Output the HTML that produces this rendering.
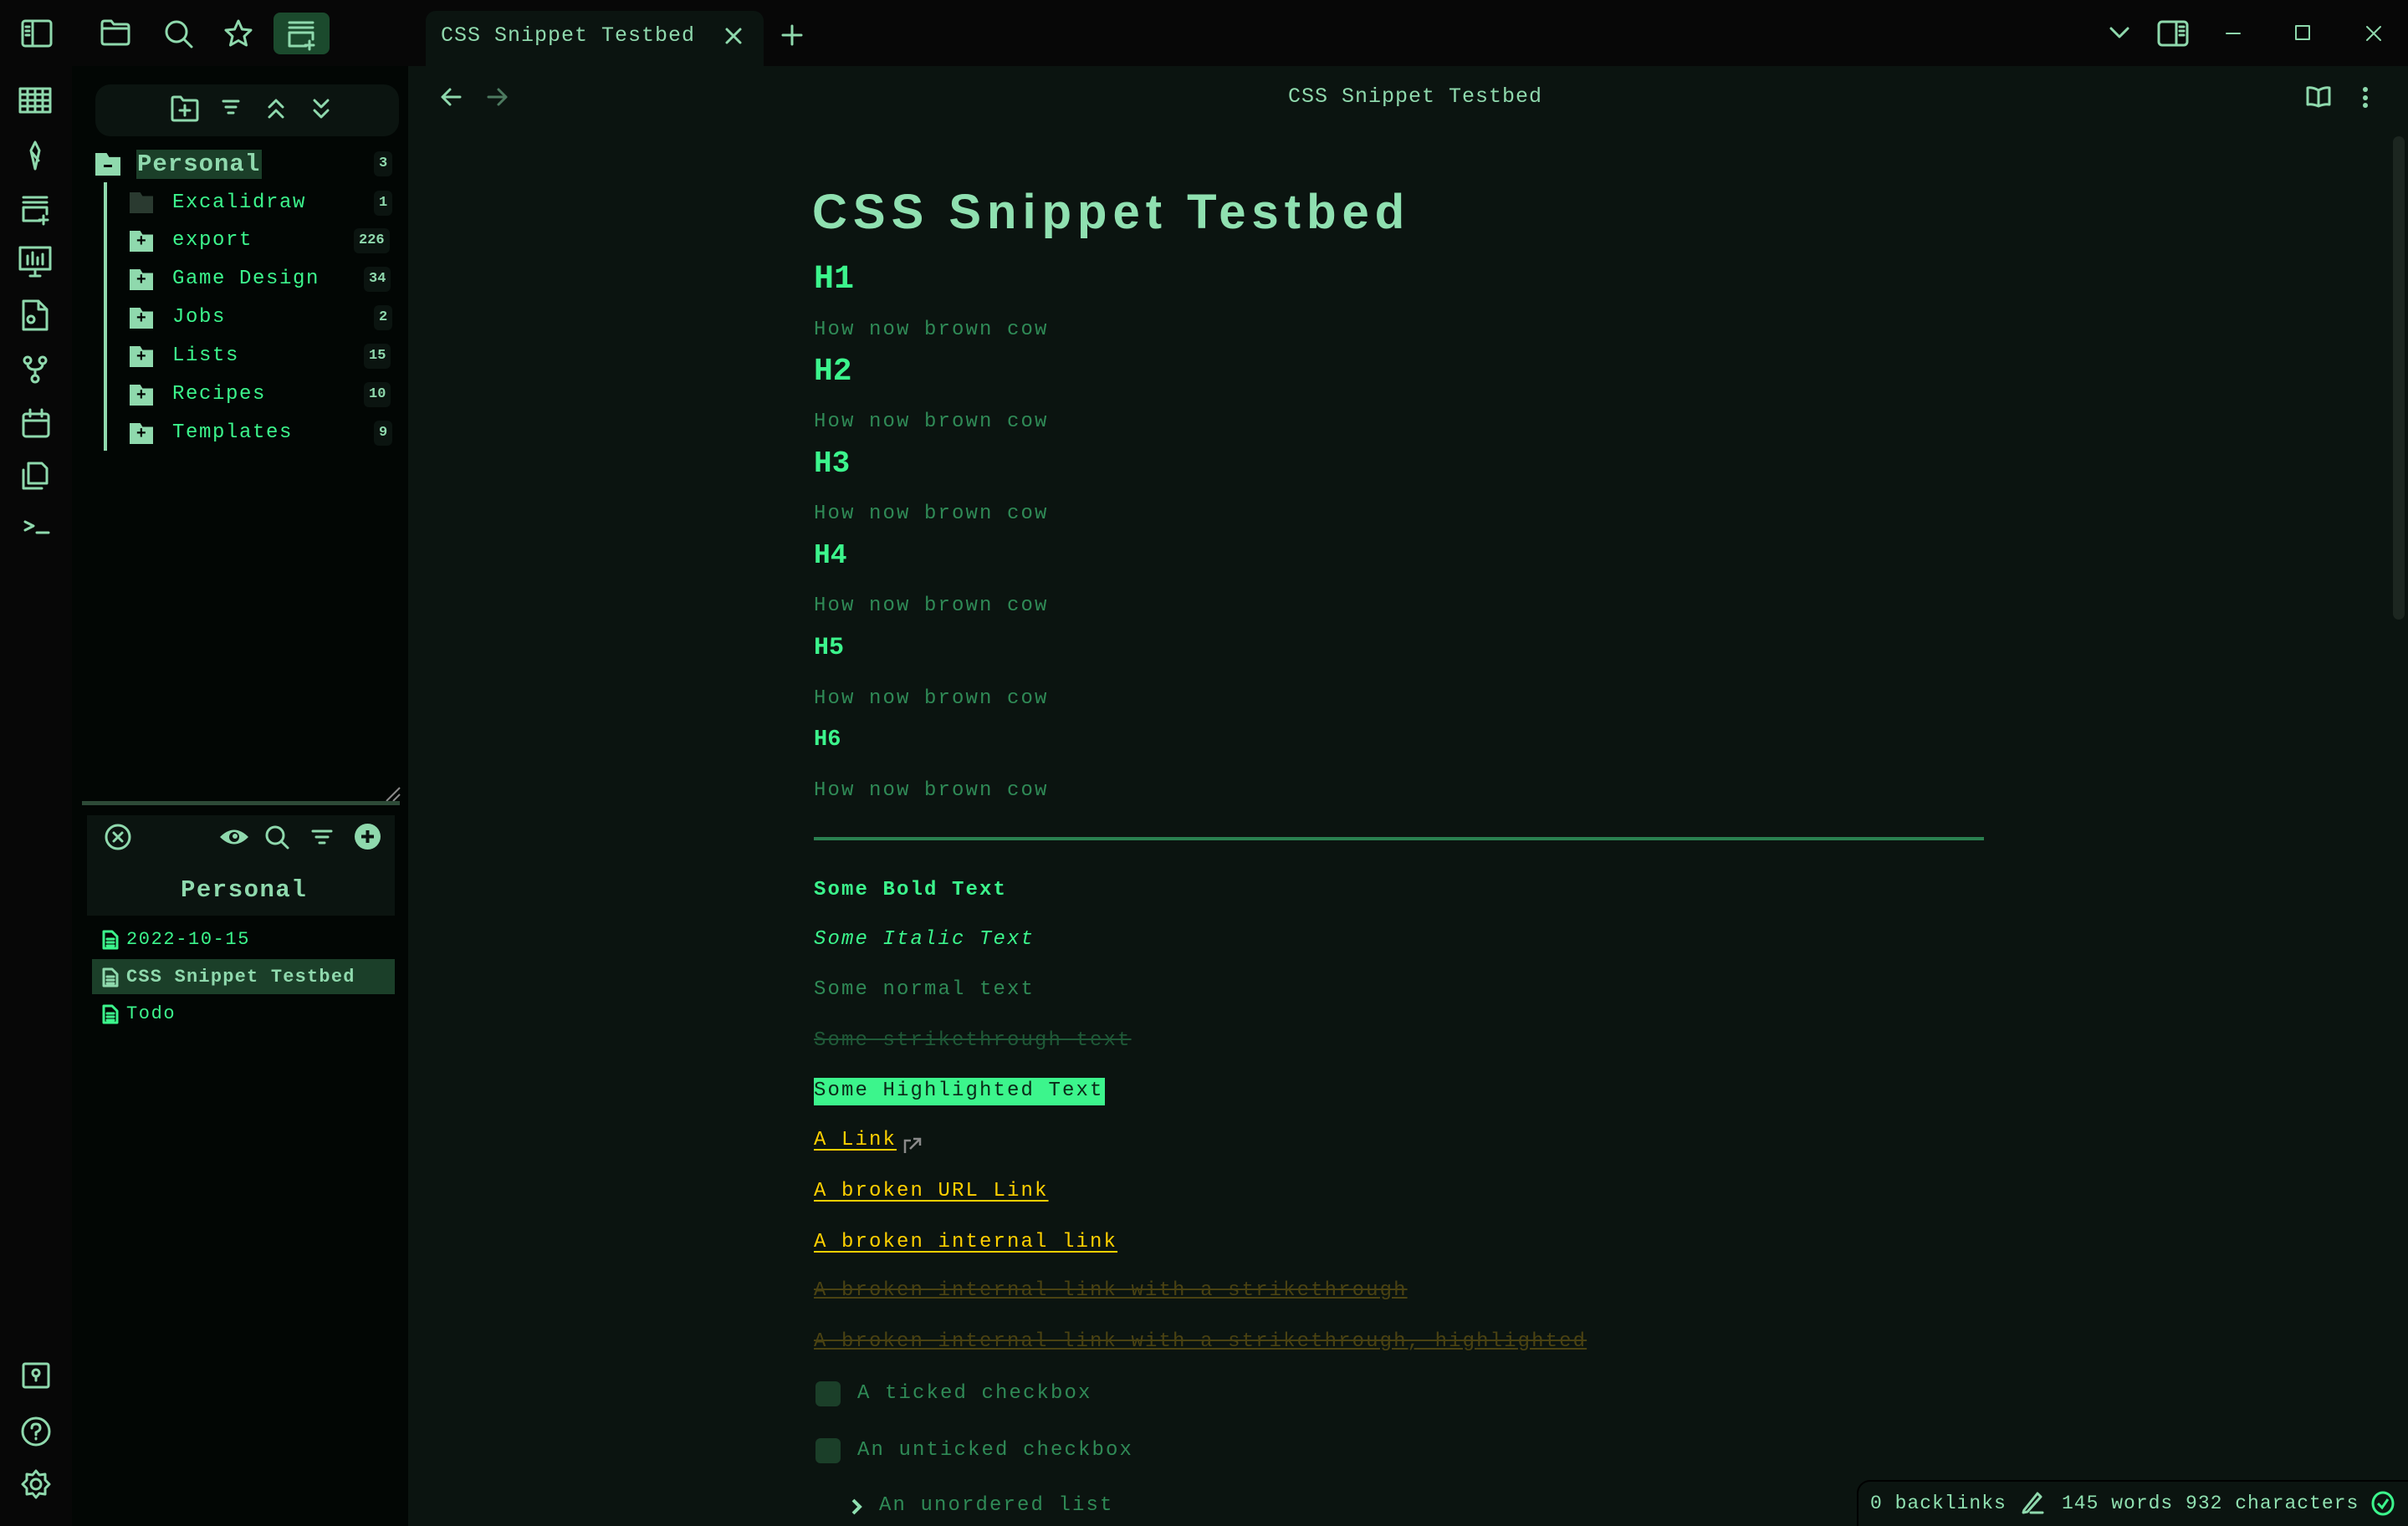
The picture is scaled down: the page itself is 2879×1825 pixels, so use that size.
<!DOCTYPE html>
<html><head><meta charset="utf-8">
<style>
*{margin:0;padding:0;box-sizing:border-box}
html,body{width:2879px;height:1825px;overflow:hidden;background:#0b1410}
body{position:relative;font-family:"Liberation Mono",monospace}
.a{position:absolute}
.t{position:absolute;white-space:nowrap;height:40px;line-height:40px}
svg{position:absolute;overflow:visible}
.ic{fill:none;stroke:#8fd9ad;stroke-width:3;stroke-linecap:round;stroke-linejoin:round}
.p{font-size:24px;letter-spacing:2.1px;color:#2f8a56;left:973px}
.h{font-weight:bold;color:#3cf58c;left:973px}
.si{font-size:24px;letter-spacing:1.6px;color:#3cf58c;left:206px}
.cnt{position:absolute;right:21px;height:30px;line-height:30px;padding:0 6px;border-radius:6px;background:#0b1410;color:#8fd9ad;font-size:17px;font-weight:bold}
.fold{position:absolute;left:155px;width:28px;height:25px;background:#8fd9ad;clip-path:polygon(0 0,45% 0,55% 18%,100% 18%,100% 100%,0 100%)}
.fold:after{content:"+";position:absolute;left:8px;top:0;font:bold 20px/25px "Liberation Sans",sans-serif;color:#020604}
</style></head><body>

<div class="a" style="left:0;top:0;width:2879px;height:79px;background:#070707"></div>
<div class="a" style="left:0;top:79px;width:86px;height:1746px;background:#070707"></div>
<div class="a" style="left:86px;top:79px;width:402px;height:1746px;background:#020604"></div>

<div class="a" style="left:509px;top:13px;width:404px;height:70px;background:#0b1410;border-radius:12px 12px 0 0"></div>
<div class="t" style="left:527px;top:23px;font-size:25px;letter-spacing:1px;color:#8fd9ad">CSS Snippet Testbed</div>
<svg class="ic" style="left:868px;top:34px" width="18" height="18"><path d="M1 1L17 17M17 1L1 17"/></svg>
<svg class="ic" style="left:936px;top:31px" width="22" height="22"><path d="M11 0V22M0 11H22"/></svg>

<svg class="ic" style="left:27px;top:25px" width="34" height="30"><rect x="0" y="0" width="34" height="30" rx="3"/><path d="M12 0V30M4 7H8M4 12H8M4 17H8"/></svg>
<svg class="ic" style="left:122px;top:25px" width="32" height="28"><path d="M0 3Q0 0 3 0H11L14 4H29Q32 4 32 7V25Q32 28 29 28H3Q0 28 0 25Z M0 9H32"/></svg>
<svg class="ic" style="left:197px;top:24px" width="34" height="34"><circle cx="14" cy="14" r="12"/><path d="M23 23L32 32"/></svg>
<svg class="ic" style="left:269px;top:24px" width="32" height="32"><path d="M16 1L20.5 11L31 12L23 19.5L25.5 30L16 24.5L6.5 30L9 19.5L1 12L11.5 11Z"/></svg>
<div class="a" style="left:327px;top:15px;width:67px;height:50px;background:#1b4a2d;border-radius:8px"></div>
<svg class="ic" style="left:344px;top:25px" width="34" height="32"><path d="M2 2H30M2 8H30M2 14V30H22M2 14H30V22M26 24V34M21 29H31"/></svg>

<svg class="ic" style="left:2524px;top:34px" width="20" height="12"><path d="M0 0L10 10L20 0"/></svg>
<svg class="ic" style="left:2581px;top:26px" width="34" height="28"><rect x="0" y="0" width="34" height="28" rx="4"/><path d="M21 0V28M25 6H30M25 11H30M25 16H30"/></svg>
<svg class="ic" style="left:2662px;top:40px" width="16" height="2"><path d="M0 0H16" style="stroke-width:2"/></svg>
<svg class="ic" style="left:2745px;top:31px" width="16" height="16"><rect x="0" y="0" width="16" height="16" style="stroke-width:2"/></svg>
<svg class="ic" style="left:2830px;top:32px" width="16" height="16"><path d="M0 0L16 16M16 0L0 16" style="stroke-width:2"/></svg>

<svg class="ic" style="left:24px;top:106px" width="36" height="28"><rect x="0" y="0" width="36" height="28"/><path d="M0 7H36M0 14H36M0 21H36M9 0V28M18 0V28M27 0V28"/></svg>
<svg class="ic" style="left:35px;top:170px" width="14" height="32"><path d="M7 0L12 10L7 32L2 10Z M3 12L11 22"/></svg>
<svg class="ic" style="left:26px;top:234px" width="34" height="32"><path d="M2 2H30M2 8H30M2 14V30H22M2 14H30V22M26 24V34M21 29H31"/></svg>
<svg class="ic" style="left:24px;top:296px" width="36" height="34"><rect x="0" y="0" width="36" height="26"/><path d="M9 20V10M15 20V6M21 20V12M27 20V8M18 26V34M12 34H24"/></svg>
<svg class="ic" style="left:28px;top:360px" width="28" height="34"><path d="M0 0H18L28 10V34H0Z M18 0V10H28"/><circle cx="9" cy="22" r="4"/></svg>
<svg class="ic" style="left:29px;top:426px" width="26" height="32"><circle cx="4" cy="5" r="4"/><circle cx="22" cy="5" r="4"/><circle cx="13" cy="27" r="4"/><path d="M4 9Q4 16 13 16Q22 16 22 9M13 16V23"/></svg>
<svg class="ic" style="left:28px;top:490px" width="30" height="32"><rect x="0" y="5" width="30" height="27" rx="3"/><path d="M0 13H30M8 0V8M22 0V8"/></svg>
<svg class="ic" style="left:28px;top:554px" width="30" height="32"><path d="M6 0H22L28 6V24H6Z M0 8V30H22"/></svg>
<svg class="ic" style="left:30px;top:624px" width="28" height="14"><path d="M0 0L10 5L0 10M14 13H28"/></svg>
<svg class="ic" style="left:28px;top:1631px" width="32" height="28"><rect x="0" y="0" width="30" height="28" rx="2"/><circle cx="15" cy="11" r="4"/><path d="M15 15V20"/></svg>
<svg class="ic" style="left:26px;top:1695px" width="34" height="34"><circle cx="17" cy="17" r="16"/><path d="M12 13Q12 8 17 8Q22 8 22 13Q22 16 17 18V21M17 25V26"/></svg>
<svg class="ic" style="left:26px;top:1758px" width="34" height="34"><circle cx="17" cy="17" r="6"/><path d="M17 1L21 6L28 5L28 12L33 17L28 22L28 29L21 28L17 33L13 28L6 29L6 22L1 17L6 12L6 5L13 6Z"/></svg>

<div class="a" style="left:114px;top:101px;width:363px;height:62px;background:#0b1410;border-radius:18px"></div>
<svg class="ic" style="left:206px;top:116px" width="30" height="28"><path d="M0 2Q0 0 2 0H10L13 4H28Q30 4 30 6V26Q30 28 28 28H2Q0 28 0 26Z M15 10V22M9 16H21"/></svg>
<svg class="ic" style="left:267px;top:120px" width="18" height="20"><path d="M0 1H18M3 8H15M6 15H12"/></svg>
<svg class="ic" style="left:320px;top:118px" width="20" height="24"><path d="M2 10L10 2L18 10M2 22L10 14L18 22"/></svg>
<svg class="ic" style="left:374px;top:118px" width="20" height="24"><path d="M2 2L10 10L18 2M2 14L10 22L18 14"/></svg>

<div class="a" style="left:114px;top:183px;width:30px;height:27px;background:#8fd9ad;clip-path:polygon(0 0,45% 0,55% 18%,100% 18%,100% 100%,0 100%)"></div>
<div class="a" style="left:124px;top:197px;width:10px;height:3px;background:#020604"></div>
<div class="a" style="left:163px;top:179px;width:150px;height:35px;background:#1b3f29"></div>
<div class="t" style="left:164px;top:177px;font-size:29px;font-weight:bold;letter-spacing:1px;color:#8fd9ad">Personal</div>
<div class="cnt" style="top:181px;left:447px;right:auto">3</div>
<div class="a" style="left:124px;top:218px;width:4px;height:321px;background:#8fd9ad"></div>

<div class="a" style="left:155px;top:230px;width:28px;height:25px;background:#2a3a30;clip-path:polygon(0 0,45% 0,55% 18%,100% 18%,100% 100%,0 100%)"></div>
<div class="t si" style="top:223px">Excalidraw</div><div class="cnt" style="top:228px;left:447px;right:auto">1</div>
<div class="fold" style="top:276px"></div><div class="t si" style="top:268px">export</div><div class="cnt" style="top:273px;left:423px;right:auto">226</div>
<div class="fold" style="top:322px"></div><div class="t si" style="top:314px">Game Design</div><div class="cnt" style="top:319px;left:435px;right:auto">34</div>
<div class="fold" style="top:368px"></div><div class="t si" style="top:360px">Jobs</div><div class="cnt" style="top:365px;left:447px;right:auto">2</div>
<div class="fold" style="top:414px"></div><div class="t si" style="top:406px">Lists</div><div class="cnt" style="top:411px;left:435px;right:auto">15</div>
<div class="fold" style="top:460px"></div><div class="t si" style="top:452px">Recipes</div><div class="cnt" style="top:457px;left:435px;right:auto">10</div>
<div class="fold" style="top:506px"></div><div class="t si" style="top:498px">Templates</div><div class="cnt" style="top:503px;left:447px;right:auto">9</div>

<svg style="left:462px;top:942px" width="16" height="16" fill="none" stroke="#8a8a8a" stroke-width="2"><path d="M0 16L16 0M8 16L16 8"/></svg>
<div class="a" style="left:98px;top:958px;width:380px;height:5px;background:#2d4a37"></div>

<div class="a" style="left:104px;top:975px;width:368px;height:120px;background:#0b1410"></div>
<svg class="ic" style="left:126px;top:986px" width="30" height="30"><circle cx="15" cy="15" r="14"/><path d="M10 10L20 20M20 10L10 20"/></svg>
<svg style="left:263px;top:990px" width="34" height="22"><path d="M0 11Q17 -6 34 11Q17 28 0 11Z" fill="#8fd9ad"/><circle cx="17" cy="11" r="6" fill="#0b1410"/><circle cx="18" cy="10" r="3" fill="#8fd9ad"/></svg>
<svg class="ic" style="left:317px;top:987px" width="28" height="28"><circle cx="12" cy="12" r="10"/><path d="M19 19L27 27"/></svg>
<svg class="ic" style="left:374px;top:993px" width="22" height="18"><path d="M0 1H22M4 8H18M8 15H14"/></svg>
<div class="a" style="left:424px;top:985px;width:31px;height:31px;border-radius:50%;background:#8fd9ad"></div>
<svg style="left:430px;top:991px" width="19" height="19" stroke="#0b1410" stroke-width="4"><path d="M9.5 2V17M2 9.5H17"/></svg>
<div class="t" style="left:216px;top:1045px;font-size:29px;font-weight:bold;letter-spacing:1.5px;color:#8fd9ad">Personal</div>

<div class="a" style="left:110px;top:1147px;width:362px;height:42px;background:#1b3f29"></div>
<svg class="ic" style="left:124px;top:1114px;stroke:#3cf58c" width="16" height="20"><path d="M0 0H10L16 6V20H0Z M4 9H12M4 13H12M4 17H12"/></svg>
<div class="t" style="left:151px;top:1104px;font-size:22px;letter-spacing:1.6px;color:#3cf58c">2022-10-15</div>
<svg class="ic" style="left:124px;top:1159px" width="16" height="20"><path d="M0 0H10L16 6V20H0Z M4 9H12M4 13H12M4 17H12"/></svg>
<div class="t" style="left:151px;top:1149px;font-size:22px;font-weight:bold;letter-spacing:1.2px;color:#8fd9ad">CSS Snippet Testbed</div>
<svg class="ic" style="left:124px;top:1203px;stroke:#3cf58c" width="16" height="20"><path d="M0 0H10L16 6V20H0Z M4 9H12M4 13H12M4 17H12"/></svg>
<div class="t" style="left:151px;top:1193px;font-size:22px;letter-spacing:1.6px;color:#3cf58c">Todo</div>

<svg class="ic" style="left:528px;top:106px" width="22" height="20"><path d="M22 10H1M10 1L1 10L10 19"/></svg>
<svg class="ic" style="left:584px;top:106px;stroke:#4d7a60" width="22" height="20"><path d="M0 10H21M12 1L21 10L12 19"/></svg>
<div class="t" style="left:1540px;top:96px;font-size:25px;letter-spacing:1px;color:#8fd9ad">CSS Snippet Testbed</div>
<svg class="ic" style="left:2758px;top:104px" width="28" height="24"><path d="M14 4Q7 0 1 1V21Q7 20 14 23Q21 20 27 21V1Q21 0 14 4V23"/></svg>
<svg style="left:2824px;top:104px" width="8" height="26" fill="#8fd9ad"><circle cx="4" cy="3" r="3"/><circle cx="4" cy="13" r="3"/><circle cx="4" cy="22" r="3"/></svg>
<div class="a" style="left:2861px;top:163px;width:14px;height:578px;border-radius:7px;background:#1c2620"></div>

<div class="a" style="left:971px;top:219px;height:70px;line-height:70px;white-space:nowrap;font-family:'Liberation Sans',sans-serif;font-weight:bold;font-size:58px;letter-spacing:7px;color:#8fe0b0">CSS Snippet Testbed</div>

<div class="t h" style="top:315px;font-size:40px">H1</div>
<div class="t p" style="top:375px">How now brown cow</div>
<div class="t h" style="top:425px;font-size:38px">H2</div>
<div class="t p" style="top:485px">How now brown cow</div>
<div class="t h" style="top:535px;font-size:36px">H3</div>
<div class="t p" style="top:595px">How now brown cow</div>
<div class="t h" style="top:645px;font-size:33px">H4</div>
<div class="t p" style="top:705px">How now brown cow</div>
<div class="t h" style="top:755px;font-size:30px">H5</div>
<div class="t p" style="top:816px">How now brown cow</div>
<div class="t h" style="top:865px;font-size:27px">H6</div>
<div class="t p" style="top:926px">How now brown cow</div>

<div class="a" style="left:973px;top:1001px;width:1399px;height:4px;background:#2a8050"></div>

<div class="t p" style="top:1045px;font-weight:bold;color:#3cf58c">Some Bold Text</div>
<div class="t p" style="top:1104px;font-style:italic;color:#3cf58c">Some Italic Text</div>
<div class="t p" style="top:1164px">Some normal text</div>
<div class="t p" style="top:1225px;color:#1f5a38;text-decoration:line-through">Some strikethrough text</div>
<div class="a" style="left:973px;top:1289px;width:348px;height:33px;background:#3cf58c"></div>
<div class="t p" style="top:1285px;color:#0b2a18">Some Highlighted Text</div>
<div class="t p" style="top:1344px;color:#ffd000;text-decoration:underline;text-underline-offset:5px">A Link</div>
<svg style="left:1080px;top:1360px" width="22" height="20" fill="none" stroke="#8a8a8a" stroke-width="2.5"><path d="M2 19V4H9M8 14L20 2M12 2H20V10"/></svg>
<div class="t p" style="top:1405px;color:#ffd000;text-decoration:underline;text-underline-offset:5px">A broken URL Link</div>
<div class="t p" style="top:1466px;color:#ffd000;text-decoration:underline;text-underline-offset:5px">A broken internal link</div>
<div class="t p" style="top:1524px;color:#4a4212;text-decoration:underline line-through">A broken internal link with a strikethrough</div>
<div class="t p" style="top:1585px;color:#4a4212;text-decoration:underline line-through">A broken internal link with a strikethrough, highlighted</div>

<div class="a" style="left:975px;top:1652px;width:30px;height:30px;border-radius:6px;background:#1b3f29"></div>
<div class="t p" style="left:1025px;top:1647px">A ticked checkbox</div>
<div class="a" style="left:975px;top:1720px;width:30px;height:30px;border-radius:6px;background:#1b3f29"></div>
<div class="t p" style="left:1025px;top:1715px">An unticked checkbox</div>
<svg style="left:1018px;top:1792px" width="12" height="20" fill="none" stroke="#8fe0b0" stroke-width="4"><path d="M2 2L10 10L2 18"/></svg>
<div class="t p" style="left:1051px;top:1781px">An unordered list</div>

<div class="a" style="left:2220px;top:1770px;width:670px;height:60px;background:#0b1410;border:2px solid #000;border-radius:16px 0 0 0"></div>
<div class="t" style="left:2236px;top:1778px;font-size:23px;letter-spacing:1px;color:#8fe0b0">0 backlinks</div>
<svg class="ic" style="left:2418px;top:1784px" width="24" height="26"><path d="M2 22L18 2L22 6L6 24L1 25Z M10 25H24"/></svg>
<div class="t" style="left:2465px;top:1778px;font-size:23px;letter-spacing:1px;color:#8fe0b0">145 words 932 characters</div>
<svg style="left:2836px;top:1784px" width="26" height="28" fill="none" stroke="#3cf58c" stroke-width="3"><ellipse cx="13" cy="14" rx="12" ry="13"/><path d="M7 14L12 19L19 9"/></svg>
</body></html>
